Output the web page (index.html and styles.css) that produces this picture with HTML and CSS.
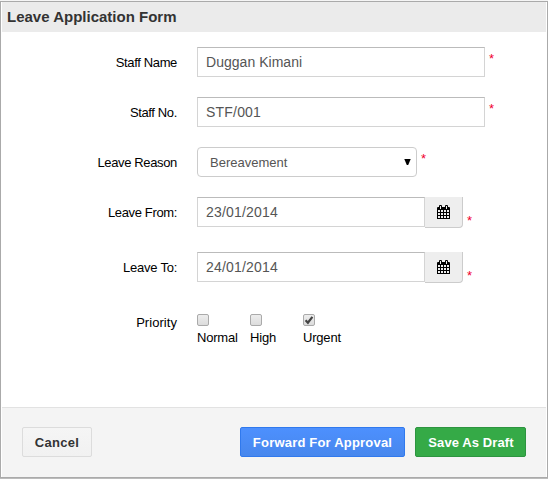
FILE: index.html
```html
<!DOCTYPE html>
<html lang="en">
<head>
<meta charset="utf-8">
<title>Leave Application Form</title>
<link rel="stylesheet" href="styles.css">
</head>
<body>
<form class="dialog">
  <header class="dialog-header"><span class="title">Leave Application Form</span></header>
  <main class="fields">
    <div class="row"><label class="label">Staff Name</label><div class="input wide name">Duggan Kimani</div><span class="req">*</span></div>
    <div class="row"><label class="label">Staff No.</label><div class="input wide">STF/001</div><span class="req">*</span></div>
    <div class="row"><label class="label">Leave Reason</label><div class="select"><span>Bereavement</span><svg width="7" height="6" viewBox="0 0 7 6"><path d="M.3 0h6.4L4.2 6H2.8z"/></svg></div><span class="req">*</span></div>
    <div class="row date-from"><label class="label">Leave From:</label><div class="input date">23/01/2014</div><div class="addon"><svg width="13" height="14" viewBox="0 0 13 14"><path fill-rule="evenodd" d="M0 3q0-1 1-1h1V1q0-1 1-1h1q1 0 1 1v1h3V1q0-1 1-1h1q1 0 1 1v1h1q1 0 1 1v11H0zM3 1v3h1V1zm6 0v3h1V1zM1 5v2h2V5zm3 0v2h2V5zm3 0v2h2V5zm3 0v2h2V5zM1 8v2h2V8zm3 0v2h2V8zm3 0v2h2V8zm3 0v2h2V8zM1 11v2h2v-2zm3 0v2h2v-2zm3 0v2h2v-2zm3 0v2h2v-2z"/></svg></div><span class="req low">*</span></div>
    <div class="row"><label class="label to">Leave To:</label><div class="input date">24/01/2014</div><div class="addon"><svg width="13" height="14" viewBox="0 0 13 14"><path fill-rule="evenodd" d="M0 3q0-1 1-1h1V1q0-1 1-1h1q1 0 1 1v1h3V1q0-1 1-1h1q1 0 1 1v1h1q1 0 1 1v11H0zM3 1v3h1V1zm6 0v3h1V1zM1 5v2h2V5zm3 0v2h2V5zm3 0v2h2V5zm3 0v2h2V5zM1 8v2h2V8zm3 0v2h2V8zm3 0v2h2V8zm3 0v2h2V8zM1 11v2h2v-2zm3 0v2h2v-2zm3 0v2h2v-2zm3 0v2h2v-2z"/></svg></div><span class="req low">*</span></div>
    <div class="row priority"><label class="label">Priority</label>
      <div class="choices">
        <div class="choice"><i class="check"></i><span>Normal</span></div>
        <div class="choice"><i class="check"></i><span>High</span></div>
        <div class="choice"><i class="check"><svg width="10" height="10" viewBox="0 0 10 10"><path d="M1.6 5.2l2.3 2.5L8.4 1.8" fill="none" stroke="#444" stroke-width="2.2"/></svg></i><span>Urgent</span></div>
      </div>
    </div>
  </main>
  <footer class="actions">
    <button type="button" class="btn cancel">Cancel</button>
    <button type="button" class="btn forward">Forward For Approval</button>
    <button type="button" class="btn save">Save As Draft</button>
  </footer>
</form>
</body>
</html>
```

FILE: styles.css
```css
* { box-sizing: border-box; }
body {
  margin: 0;
  height: 479px;
  padding-top: 1px;
  overflow: hidden;
  background: #f5f5f5;
  font-family: "Liberation Sans", Arial, sans-serif;
  font-size: 13px;
  color: #000;
}
.dialog {
  width: 548px;
  height: 477px;
  display: flex;
  flex-direction: column;
  border: 1px solid #aaa;
  background: #fff;
  box-shadow: 0 1px 1px #bbb;
}
.dialog-header {
  height: 30px;
  margin: 0 1px;
  padding-left: 5px;
  background: #ebebeb;
  color: #333;
  font-weight: bold;
  font-size: 15px;
  line-height: 30px;
}
.fields { flex: 1; padding-top: 15px; }
.row { display: flex; height: 30px; margin-bottom: 20px; }
.date-from { margin-bottom: 25px; }
.label {
  width: 176px;
  margin-right: 20px;
  text-align: right;
  line-height: 31px;
  letter-spacing: -.36px;
}
.label.to { letter-spacing: -.25px; }
.input {
  height: 30px;
  padding-left: 8px;
  border: 1px solid #d4d4d4;
  border-top-color: #bbb;
  color: #555;
  font-size: 14px;
  line-height: 28px;
  letter-spacing: .2px;
}
.input.name { letter-spacing: .03px; }
.wide { width: 288px; }
.date { width: 228px; }
.select {
  width: 220px;
  height: 30px;
  padding: 0 5px 0 12px;
  display: flex;
  align-items: center;
  justify-content: space-between;
  border: 1px solid #ccc;
  border-radius: 4px;
  color: #555;
}
.select svg { fill: #000; margin-bottom: 1px; }
.req { margin: 4px 0 0 4px; color: #f0002c; font-size: 13px; line-height: 15px; }
.req.low { margin-top: 16px; }
.addon {
  width: 38px;
  height: 31px;
  display: flex;
  align-items: center;
  justify-content: center;
  background: #eee;
  border: 1px solid #ccc;
  border-width: 0 1px 1px 0;
  border-radius: 0 0 4px 0;
}
.priority { height: 45px; }
.priority .label { line-height: 41px; letter-spacing: .05px; }
.choices { display: flex; padding-top: 12px; }
.choice { width: 53px; display: flex; flex-direction: column; }
.choice span { line-height: 15px; margin-top: 4px; letter-spacing: -.2px; }
.check {
  flex: none;
  width: 12px;
  height: 12px;
  border: 1px solid #aaa;
  border-radius: 2px;
  background: linear-gradient(#ededed, #dcdcdc);
}
.check svg { display: block; }
.actions {
  height: 70px;
  display: flex;
  align-items: flex-start;
  margin: 0 1px;
  padding: 19px 20px 0;
  border-top: 1px solid #e2e2e2;
  background: #f4f4f4;
}
.btn {
  height: 30px;
  padding: 0;
  border: 1px solid;
  border-radius: 2px;
  font: bold 13px "Liberation Sans", Arial, sans-serif;
  letter-spacing: .2px;
  color: #fff;
}
.cancel { width: 70px; margin-right: auto; color: #333; border-color: #dcdcdc; background: linear-gradient(#f5f5f5, #f1f1f1); letter-spacing: .3px; }
.forward { width: 165px; margin-right: 10px; border-color: #3079ed; background: linear-gradient(#4d90fe, #4787ed); }
.save { width: 111px; padding-left: 1px; border-color: #2d9440; background: #35aa47; letter-spacing: .1px; }
```
